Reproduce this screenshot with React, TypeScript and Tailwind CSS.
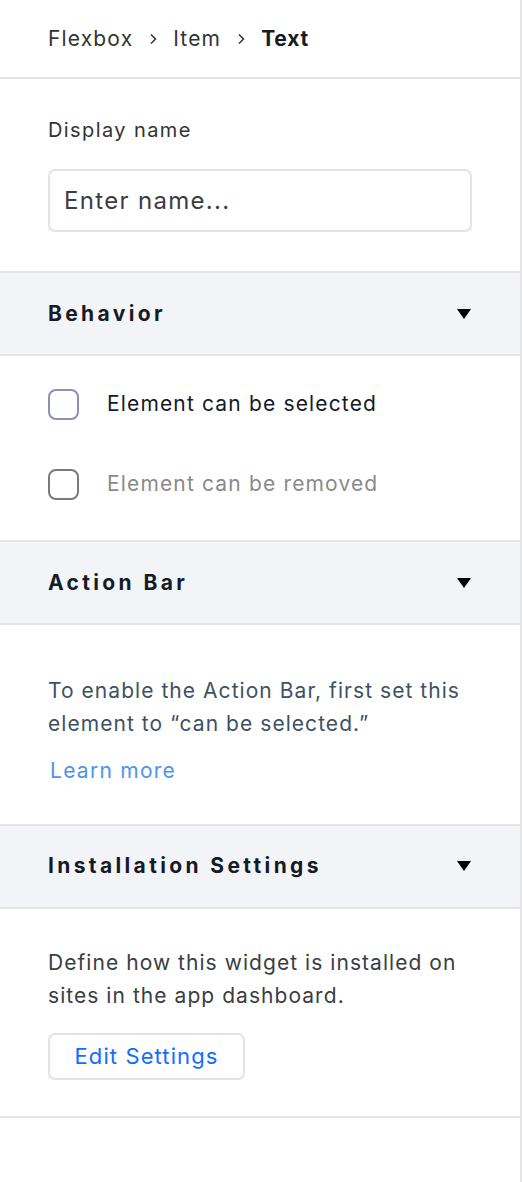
const font = "font-['Inter','Noto_Sans',sans-serif]";

function Chevron() {
  return (
    <svg width="8" height="12" viewBox="0 0 8 12" className="mx-[16px]">
      <path d="M2 1.5l4.5 4.5L2 10.5" fill="none" stroke="#333" strokeWidth="1.5" />
    </svg>
  );
}

function SectionHeader({ title }: { title: string }) {
  return (
    <div className="flex h-[83px] items-center justify-between bg-[#f3f4f7] pl-12 pr-12 border-b-2 border-[#e5e5e5]">
      <span className="text-[21px] font-bold tracking-[0.16em] text-[#151b26]">{title}</span>
      <svg width="16" height="12" viewBox="0 0 16 12">
        <path d="M1 1h14L8 11z" fill="#000" />
      </svg>
    </div>
  );
}

function Checkbox({ label, muted }: { label: string; muted?: boolean }) {
  return (
    <div className="flex h-[80px] items-center gap-7">
      <div
        className={`h-[31px] w-[31px] rounded-[8px] border-2 ${
          muted ? "border-[#7a7a7a]" : "border-[#8e90b0]"
        }`}
      />
      <span className={`text-[21px] tracking-[0.055em] ${muted ? "text-[#8a8a8a]" : "text-[#151b26]"}`}>
        {label}
      </span>
    </div>
  );
}

export default function App() {
  return (
    <div className={`${font} h-[1182px] w-[522px] bg-white`}>
      <div className="h-full w-[522px] border-r-2 border-[#e5e5e5]">
        {/* Breadcrumb */}
        <div className="flex h-[79px] items-center pl-12 text-[21px] tracking-[0.055em] text-[#333] border-b-2 border-[#e5e5e5]">
          <span>Flexbox</span>
          <Chevron />
          <span>Item</span>
          <Chevron />
          <span className="font-bold tracking-[0.04em] text-[#151b26]">Text</span>
        </div>

        {/* Display name */}
        <div className="px-12 pt-[36px] pb-[39px] border-b-2 border-[#e5e5e5]">
          <div className="text-[20px] tracking-[0.07em] text-[#333]">Display name</div>
          <div className="mt-[24px] flex h-[63px] w-[424px] items-center rounded-[7px] border-2 border-[#e2e3ea] px-[14px] text-[24px] tracking-[0.055em] text-[#3a3d44]">
            Enter name...
          </div>
        </div>

        <SectionHeader title="Behavior" />
        <div className="px-12 pt-[8px] pb-[16px] border-b-2 border-[#e5e5e5]">
          <Checkbox label="Element can be selected" />
          <Checkbox label="Element can be removed" muted />
        </div>

        <SectionHeader title="Action Bar" />
        <div className="px-12 pt-[49px] pb-[37px] border-b-2 border-[#e5e5e5]">
          <p className="text-[21px] leading-[33px] tracking-[0.05em] text-[#3e5165]">
            To enable the Action Bar, first set this element to “can be selected.”
          </p>
          <div className="mt-[15px] pl-[2px] text-[21px] tracking-[0.06em] text-[#4b96ec]">Learn more</div>
        </div>

        <SectionHeader title="Installation Settings" />
        <div className="px-12 pt-[37px] pb-[36px] border-b-2 border-[#e5e5e5]">
          <p className="text-[21px] leading-[33px] tracking-[0.05em] text-[#3a3d44]">
            Define how this widget is installed on sites in the app dashboard.
          </p>
          <div className="mt-[21px] flex h-[47px] w-[197px] items-center justify-center rounded-[7px] border-2 border-[#e2e3ea] text-[22px] tracking-[0.05em] text-[#116dff]">
            Edit Settings
          </div>
        </div>
      </div>
    </div>
  );
}
